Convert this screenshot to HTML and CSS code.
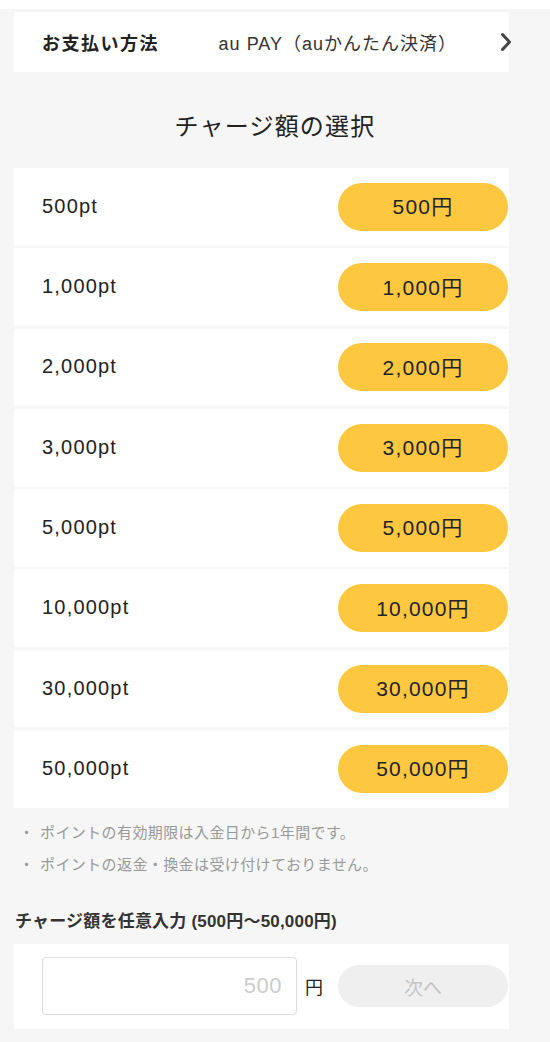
FILE: index.html
```html
<!DOCTYPE html>
<html lang="ja">
<head>
<meta charset="utf-8">
<link rel="stylesheet" href="styles.css">
</head>
<body>
<div class="topstrip"></div>
<main class="page">
  <section class="card payment">
    <span class="pay-label">お支払い方法</span>
    <span class="pay-value">au PAY（auかんたん決済）</span>
    <svg class="chev" width="12" height="20" viewBox="0 0 12 20"><path d="M2.5 2.5 L9.5 10 L2.5 17.5" fill="none" stroke="#444" stroke-width="3" stroke-linecap="round" stroke-linejoin="round"/></svg>
  </section>

  <h1 class="title">チャージ額の選択</h1>

  <section class="list">
    <div class="row"><span class="pt">500pt</span><button class="price">500円</button></div>
    <div class="row"><span class="pt">1,000pt</span><button class="price">1,000円</button></div>
    <div class="row"><span class="pt">2,000pt</span><button class="price">2,000円</button></div>
    <div class="row"><span class="pt">3,000pt</span><button class="price">3,000円</button></div>
    <div class="row"><span class="pt">5,000pt</span><button class="price">5,000円</button></div>
    <div class="row"><span class="pt">10,000pt</span><button class="price">10,000円</button></div>
    <div class="row"><span class="pt">30,000pt</span><button class="price">30,000円</button></div>
    <div class="row"><span class="pt">50,000pt</span><button class="price">50,000円</button></div>
  </section>

  <ul class="notes">
    <li>ポイントの有効期限は入金日から1年間です。</li>
    <li>ポイントの返金・換金は受け付けておりません。</li>
  </ul>

  <h2 class="free-title">チャージ額を任意入力 (500円〜50,000円)</h2>
  <section class="card free">
    <div class="input-box"><span class="placeholder">500</span></div>
    <span class="yen">円</span>
    <button class="next">次へ</button>
  </section>
</main>
</body>
</html>
```

FILE: styles.css
```css
* { box-sizing: border-box; }
html, body { margin: 0; padding: 0; }
body {
  background: #f6f6f6;
  font-family: "Liberation Sans", "Noto Sans CJK JP", sans-serif;
  color: #222;
  width: 550px;
  height: 1042px;
  overflow: hidden;
}
button { font-family: "Liberation Sans", "Noto Sans CJK JP", sans-serif; }
.topstrip { height: 9px; background: #fff; }
.page { padding: 3px 41px 0 14px; }
.card { background: #fff; }
.payment {
  height: 60px;
  display: flex;
  align-items: center;
  padding: 0 0 0 28px;
}
.pay-label { font-size: 18px; font-weight: 700; color: #222; letter-spacing: 1.5px; }
.pay-value { margin-left: auto; font-size: 18px; color: #333; letter-spacing: 1px; }
.chev { margin: 0 -3px 0 43px; }
.title {
  margin: 0 -41px 0 -14px;
  height: 100px;
  display: flex;
  align-items: center;
  justify-content: center;
  font-size: 24px;
  font-weight: 400;
  color: #222;
  letter-spacing: 1.2px;
  padding-top: 4px;
}
.list { display: flex; flex-direction: column; gap: 2.6px; margin-top: -4px; }
.row {
  background: #fff;
  height: 77.7px;
  display: flex;
  align-items: center;
  justify-content: space-between;
  padding: 0 1px 0 28px;
}
.pt { font-size: 20px; color: #222; letter-spacing: 1.2px; margin-top: -1px; }
.price {
  width: 170px;
  height: 48px;
  border: none;
  border-radius: 24px;
  background: #fdc840;
  font-size: 21px;
  letter-spacing: 1.2px;
  color: #222;
  padding: 0 0 3px;
}
.notes {
  list-style: none;
  margin: 0;
  padding: 9px 0 0 5px;
  color: #999;
  font-size: 15px;
  letter-spacing: 0.4px;
}
.notes li { height: 32px; line-height: 32px; }
.notes li::before { content: "・"; display: inline-block; width: 21px; letter-spacing: 0; }
.free-title {
  margin: 0;
  padding: 20px 0 0 1px;
  height: 58px;
  display: flex;
  align-items: center;
  font-size: 17px;
  font-weight: 700;
  color: #333;
  letter-spacing: 0.2px;
}
.free {
  margin-top: 5px;
  height: 85px;
  display: flex;
  align-items: center;
  padding: 0 1px 0 28px;
}
.input-box {
  width: 255px;
  height: 58px;
  border: 1px solid #ddd;
  border-radius: 4px;
  display: flex;
  align-items: center;
  justify-content: flex-end;
  padding-right: 14px;
}
.placeholder { color: #ccc; font-size: 22px; letter-spacing: 0.5px; }
.yen { margin-left: 8px; font-size: 18px; color: #222; }
.next {
  margin-left: auto;
  width: 170px;
  height: 42px;
  border: none;
  border-radius: 21px;
  background: #efefef;
  color: #c4c4c4;
  font-size: 19px;
  padding: 0;
}
```
